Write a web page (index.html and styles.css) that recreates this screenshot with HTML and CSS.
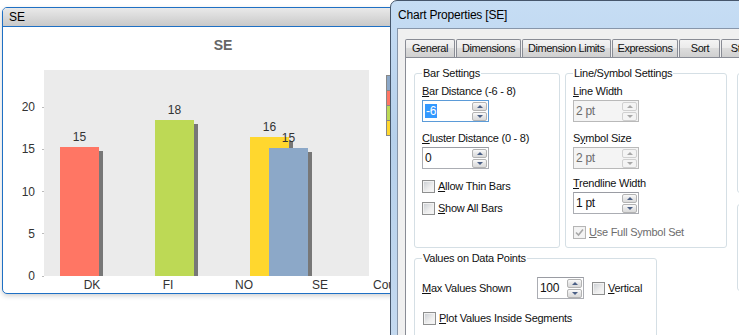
FILE: index.html
```html
<!DOCTYPE html>
<html lang="en">
  <head>
    <meta charset="UTF-8" />
    <title>Chart Properties [SE]</title>
    <link rel="stylesheet" href="styles.css">
  </head>
  <body>
    <div class="desk">
      <div class="chart-win">
        <div class="win-title">SE</div>
        <div class="chart">
          <div class="chart-title">SE</div>
          <div class="chart-main">
            <div class="y-axis">
              <span>20</span><span>15</span><span>10</span><span>5</span><span>0</span>
            </div>
            <div class="plot">
              <div class="bar-col">
                <span class="bar-val">15</span>
                <div class="bar dk" style="height: 129px"></div>
              </div>
              <div class="bar-col gap">
                <span class="bar-val">18</span>
                <div class="bar fi" style="height: 156px"></div>
              </div>
              <div class="bar-col gap">
                <span class="bar-val">16</span>
                <div class="bar no" style="height: 139px"></div>
              </div>
              <div class="bar-col overlap">
                <span class="bar-val">15</span>
                <div class="bar se" style="height: 128px"></div>
              </div>
            </div>
            <div class="legend">
              <span class="swatch se"></span>
              <span class="swatch dk"></span>
              <span class="swatch fi"></span>
              <span class="swatch no"></span>
            </div>
          </div>
          <div class="x-axis">
            <span>DK</span><span>FI</span><span>NO</span><span>SE</span>
            <span class="x-title">Country</span>
          </div>
        </div>
      </div>

      <div class="dialog">
        <div class="dlg-title">Chart Properties [SE]</div>
        <div class="dlg-client">
          <div class="tabs">
            <div class="tab">General</div>
            <div class="tab">Dimensions</div>
            <div class="tab">Dimension Limits</div>
            <div class="tab">Expressions</div>
            <div class="tab">Sort</div>
            <div class="tab">Style</div>
          </div>
          <div class="tab-panel">
            <div class="panel-grid">
              <fieldset class="group bar-group">
                <legend>Bar Settings</legend>
                <label class="lbl first"><u>B</u>ar Distance (-6 - 8)</label>
                <div class="spin focus wide">
                  <span class="spin-val"><span class="sel">-6</span></span>
                  <div class="spin-btns"><span class="up"></span><span class="down"></span></div>
                </div>
                <label class="lbl"><u>C</u>luster Distance (0 - 8)</label>
                <div class="spin wide">
                  <span class="spin-val">0</span>
                  <div class="spin-btns"><span class="up"></span><span class="down"></span></div>
                </div>
                <div class="check first-check"><span class="box"></span><span><u>A</u>llow Thin Bars</span></div>
                <div class="check"><span class="box"></span><span><u>S</u>how All Bars</span></div>
              </fieldset>

              <fieldset class="group line-group">
                <legend>Line/Symbol Settings</legend>
                <label class="lbl first"><u>L</u>ine Width</label>
                <div class="spin disabled mid">
                  <span class="spin-val">2 pt</span>
                  <div class="spin-btns"><span class="up"></span><span class="down"></span></div>
                </div>
                <label class="lbl">S<u>y</u>mbol Size</label>
                <div class="spin disabled mid">
                  <span class="spin-val">2 pt</span>
                  <div class="spin-btns"><span class="up"></span><span class="down"></span></div>
                </div>
                <label class="lbl tight"><u>T</u>rendline Width</label>
                <div class="spin mid">
                  <span class="spin-val">1 pt</span>
                  <div class="spin-btns"><span class="up"></span><span class="down"></span></div>
                </div>
                <div class="check dim low-check">
                  <span class="box checked">
                    <svg width="9" height="9" viewBox="0 0 9 9"><path d="M1 4.5 L3.5 7 L8 1.5" fill="none" stroke="#a7a7a7" stroke-width="1.6"/></svg>
                  </span>
                  <span><u>U</u>se Full Symbol Set</span>
                </div>
              </fieldset>

              <div class="side-col">
                <div class="side-box top"></div>
                <div class="side-box bottom"></div>
              </div>

              <fieldset class="group values-group">
                <legend>Values on Data Points</legend>
                <div class="max-row">
                  <label class="max-lbl"><u>M</u>ax Values Shown</label>
                  <div class="spin narrow">
                    <span class="spin-val">100</span>
                    <div class="spin-btns"><span class="up"></span><span class="down"></span></div>
                  </div>
                  <div class="check inline"><span class="box"></span><span><u>V</u>ertical</span></div>
                </div>
                <div class="check plot-check"><span class="box"></span><span><u>P</u>lot Values Inside Segments</span></div>
              </fieldset>
            </div>
          </div>
        </div>
      </div>
    </div>
  </body>
</html>
```

FILE: styles.css
```css
body {
  margin: 0;
  background: #fff;
}
.desk {
  position: relative;
  width: 739px;
  height: 335px;
  overflow: hidden;
  background: #fff;
  font-family: "Liberation Sans", Arial, sans-serif;
}

/* chart window */
.chart-win {
  position: absolute;
  left: 2px;
  top: 7px;
  width: 420px;
  height: 287px;
  box-sizing: border-box;
  border: 1px solid #1f70c4;
  border-radius: 5px;
  background: #fff;
  box-shadow: 0 2px 5px rgba(0, 0, 0, 0.18);
  overflow: hidden;
}
.win-title {
  height: 18px;
  line-height: 19px;
  padding-left: 6px;
  font-size: 12px;
  color: #000;
  background: linear-gradient(#e9e9e9, #c9c9c9);
  border-bottom: 1px solid #1f70c4;
}
.chart {
  color: #333;
  font-size: 12px;
}
.chart-title {
  width: 440px;
  padding: 9px 0 16px;
  line-height: 18px;
  text-align: center;
  font-size: 14px;
  font-weight: bold;
  color: #666;
}
.chart-main {
  display: flex;
  height: 206px;
}
.y-axis {
  width: 41px;
  height: 183px;
  margin-top: 30px;
  display: flex;
  flex-direction: column;
  justify-content: space-between;
  line-height: 14px;
  flex-shrink: 0;
}
.y-axis span {
  display: flex;
  justify-content: flex-end;
  align-items: center;
}
.y-axis span::after {
  content: "";
  width: 2px;
  height: 1px;
  margin-left: 7px;
  background: #bbb;
}
.plot {
  width: 325px;
  height: 206px;
  flex-shrink: 0;
  padding-left: 16px;
  box-sizing: border-box;
  background: #ebebeb;
  display: flex;
  align-items: flex-end;
  overflow: hidden;
}
.bar-col {
  width: 39px;
  display: flex;
  flex-direction: column;
  align-items: center;
  flex-shrink: 0;
}
.bar-col.gap {
  margin-left: 56px;
}
.bar-col.overlap {
  margin-left: -20px;
}
.bar-val {
  line-height: 14px;
  margin-bottom: 3px;
}
.bar {
  width: 39px;
  box-shadow: 4px 4px 0 #777;
}
.dk { background: #ff7664; }
.fi { background: #bdd955; }
.no { background: #ffd72e; }
.se { background: #8ca8c8; }
.legend {
  margin: 5px 0 0 17px;
  display: flex;
  flex-direction: column;
}
.swatch {
  width: 14px;
  height: 14px;
  border: 1px solid #888;
  border-top: 0;
}
.swatch:first-child {
  border-top: 1px solid #888;
}
.x-axis {
  display: flex;
  padding-left: 51px;
  margin-top: 2px;
  line-height: 14px;
}
.x-axis span {
  width: 76px;
  text-align: center;
  flex-shrink: 0;
}
.x-axis .x-title {
  width: auto;
  margin-left: 15px;
}

/* dialog */
.dialog {
  position: absolute;
  left: 390px;
  top: 0;
  width: 380px;
  height: 350px;
  box-sizing: border-box;
  border: 1px solid #46566b;
  border-radius: 7px 7px 0 0;
  background: linear-gradient(#c6ddf4, #b6d0eb 40%, #c5daf0);
  font-size: 11px;
  letter-spacing: -0.25px;
  color: #111;
}
.dlg-title {
  height: 27px;
  line-height: 28px;
  padding-left: 7px;
  font-size: 12px;
  letter-spacing: -0.2px;
  color: #000;
}
.dlg-client {
  margin-left: 6px;
  height: 320px;
  border-top: 1px solid #8796aa;
  border-left: 1px solid #8796aa;
  background: #f0f0f0;
  padding: 10px 0 0 7px;
}
.tabs {
  display: flex;
  gap: 1px;
}
.tab {
  height: 18px;
  box-sizing: border-box;
  min-width: 41px;
  padding: 0 5px;
  line-height: 17px;
  text-align: center;
  letter-spacing: -0.45px;
  white-space: nowrap;
  border: 1px solid #898c95;
  border-bottom: 0;
  border-radius: 2px 2px 0 0;
  background: linear-gradient(#f4f4f4, #ebebeb 45%, #dcdcdc 50%, #d0d0d0);
}
.tab:first-child {
  padding: 0 6px;
}
.tab-panel {
  height: 300px;
  border: 1px solid #898c95;
  background: #fff;
  padding: 8px 0 0 8px;
}
.panel-grid {
  display: grid;
  grid-template-columns: 146px 162px 120px;
  grid-template-rows: 182px auto;
  column-gap: 5px;
  row-gap: 3px;
}

.group {
  margin: 0;
  padding: 0 7px 7px;
  min-width: 0;
  border: 1px solid #d5dfe5;
  border-radius: 3px;
  box-sizing: border-box;
}
.group legend {
  padding: 0 1px;
  line-height: 14px;
}
.values-group {
  grid-column: 1 / 3;
  width: 243px;
  height: 110px;
}
.side-col {
  grid-row: 1 / 3;
  grid-column: 3;
  margin-left: 5px;
  display: flex;
  flex-direction: column;
}
.side-box {
  border: 1px solid #d5dfe5;
  border-radius: 3px;
}
.side-box.top {
  margin-top: 7px;
  height: 118px;
}
.side-box.bottom {
  margin-top: 11px;
  height: 85px;
}

.lbl {
  display: block;
  line-height: 14px;
  margin: 9px 0 2px;
  white-space: nowrap;
}
.lbl.first {
  margin-top: 4px;
}
.lbl.tight {
  margin-top: 7px;
}

/* spinner */
.spin {
  display: flex;
  height: 22px;
  box-sizing: border-box;
  border: 1px solid #abadb3;
  border-top-color: #9a9ca3;
  background: #fff;
}
.spin.wide { width: 67px; }
.spin.mid { width: 66px; }
.spin.narrow { width: 47px; }
.spin.focus {
  border-color: #5b9bd8;
}
.spin-val {
  flex: 1;
  padding-left: 2px;
  line-height: 20px;
  font-size: 12px;
  letter-spacing: -0.3px;
}
.sel {
  background: #3399ff;
  color: #fff;
  padding: 0 1px;
}
.spin-btns {
  width: 15px;
  padding: 1px 1px 0 0;
  display: flex;
  flex-direction: column;
  gap: 1px;
}
.spin-btns span {
  height: 9px;
  box-sizing: border-box;
  border: 1px solid #b3b3b3;
  border-radius: 2px;
  background: linear-gradient(#fafafa, #e6e6e6 50%, #dadada);
  display: flex;
  align-items: center;
  justify-content: center;
}
.spin-btns span::after {
  content: "";
  border-left: 3px solid transparent;
  border-right: 3px solid transparent;
}
.spin-btns .up::after {
  border-bottom: 3px solid #4a5f85;
}
.spin-btns .down::after {
  border-top: 3px solid #4a5f85;
}
.spin.disabled {
  background: #f4f4f4;
  border-color: #b9b9b9;
  color: #6d6d6d;
}
.spin.disabled .spin-btns span {
  border-color: #d0d0d0;
  background: #f4f4f4;
}
.spin.disabled .up::after {
  border-bottom-color: #a8a8a8;
}
.spin.disabled .down::after {
  border-top-color: #a8a8a8;
}

/* checkboxes */
.check {
  display: flex;
  align-items: center;
  gap: 3px;
  line-height: 14px;
  margin-top: 8px;
  white-space: nowrap;
}
.check.first-check {
  margin-top: 10px;
}
.check.low-check {
  margin-top: 11px;
}
.box {
  width: 13px;
  height: 13px;
  box-sizing: border-box;
  border: 1px solid #8e8f8f;
  background: linear-gradient(135deg, #c8ccd1, #eeeeee 60%, #f8f8f8);
  box-shadow: inset 0 0 0 1px #f2f2f2;
  flex-shrink: 0;
  display: flex;
  align-items: center;
  justify-content: center;
}
.box.checked {
  border-color: #b5b5b5;
  background: #f4f4f4;
}
.check.dim {
  color: #6d6d6d;
}
.max-row {
  display: flex;
  align-items: center;
  margin-top: 12px;
}
.max-lbl {
  width: 115px;
  flex-shrink: 0;
}
.check.inline {
  margin: 0 0 0 8px;
}
.check.plot-check {
  margin-top: 12px;
  margin-left: 1px;
}
```
